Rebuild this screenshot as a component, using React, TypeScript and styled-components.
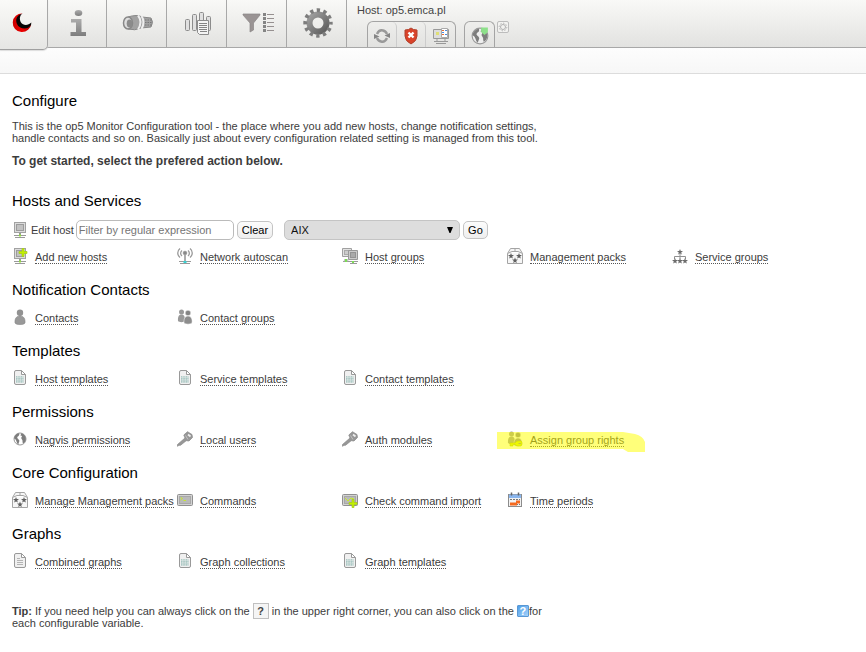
import React from "react";
import styled, { createGlobalStyle } from "styled-components";

const GlobalStyle = createGlobalStyle`
  * { box-sizing: border-box; }
  body {
    margin: 0;
    background: #fff;
    color: #3c3c3c;
    font: 11px/12px "Liberation Sans", Arial, sans-serif;
  }
  button, input, select { font: inherit; }
`;

/* ---------- header ---------- */

const Header = styled.header`
  display: flex;
  align-items: flex-start;
  height: 48px;
  background: linear-gradient(#f9f9f7, #e2e2e0);
  border-bottom: 1px solid #a8a8a8;
`;

const Nav = styled.nav`
  display: flex;
  flex: none;
`;

const Tab = styled.a<{ $active?: boolean }>`
  display: flex;
  align-items: center;
  justify-content: center;
  width: ${(p) => (p.$active ? 48 : 60)}px;
  height: ${(p) => (p.$active ? 50 : 47)}px;
  padding-right: ${(p) => (p.$active ? 4 : 0)}px;
  padding-bottom: ${(p) => (p.$active ? 4 : 2)}px;
  padding-left: ${(p) => (p.$active ? 0 : 2)}px;
  border-right: 1px solid #a8a8a8;
  border-bottom: ${(p) => (p.$active ? "1px solid #a0a0a0" : "0")};
  border-bottom-right-radius: ${(p) => (p.$active ? 5 : 0)}px;
  background: ${(p) => (p.$active ? "linear-gradient(#fafaf8, #e6e6e4)" : "transparent")};
  box-shadow: ${(p) => (p.$active ? "0 1px 1px #ddd" : "none")};
  &:nth-child(2) { width: 59px; }
`;

const HostArea = styled.div`
  display: flex;
  flex-direction: column;
  gap: 5px;
  padding: 4px 10px 0;
  color: #444;
`;

const QuickBar = styled.div`
  display: flex;
  align-items: flex-start;
  padding-left: 10px;
`;

const QuickGroup = styled.div`
  display: flex;
  height: 26px;
  margin-right: 8px;
  border: 1px solid #a4a4a4;
  border-bottom: 0;
  border-radius: 6px 6px 0 0;
  overflow: hidden;
`;

const QuickLink = styled.a`
  display: flex;
  align-items: center;
  justify-content: center;
  width: 29px;
  padding-top: 2px;
  border-right: 1px solid #ccc;
  border-top-right-radius: 5px;
  &:last-child { border-right: 0; }
`;

const SettingsButton = styled.button`
  display: flex;
  align-items: center;
  justify-content: center;
  width: 12px;
  height: 12px;
  margin-left: -6px;
  padding: 0;
  border: 1px solid #bcbcbc;
  border-radius: 2px;
  background: #f2f2f0;
`;

const SubBar = styled.div`
  height: 26px;
  background: linear-gradient(#fdfdfd, #f7f7f7);
  border-bottom: 1px solid #dcdcdc;
`;

/* ---------- content ---------- */

const Main = styled.main`
  padding: 18px 12px 22px;
`;

const Heading = styled.h2`
  margin: 0 0 10px;
  color: #000;
  font-size: 15px;
  font-weight: 400;
  line-height: 18px;
`;

const Intro = styled.p`
  max-width: 540px;
  margin: 0 0 11px;
`;

const Lead = styled(Intro)`
  font-size: 12px;
  font-weight: 700;
`;

const Section = styled.section<{ $first?: boolean }>`
  margin-top: ${(p) => (p.$first ? 25 : 15)}px;
`;

const FilterForm = styled.form`
  display: flex;
  align-items: center;
  margin-bottom: 8px;
`;

const FilterLabel = styled.label`
  display: flex;
  align-items: center;
  gap: 3px;
  margin-right: 2px;
`;

const FilterInput = styled.input`
  width: 158px;
  height: 20px;
  padding: 0 2px;
  border: 1px solid #bbb;
  border-radius: 5px;
  background: #fff;
  &::placeholder { color: #757575; opacity: 1; }
`;

const Button = styled.button`
  height: 18px;
  margin-left: 3px;
  padding: 0 4px;
  border: 1px solid #c4c4c4;
  border-radius: 5px;
  background: linear-gradient(#fcfcfc, #eee);
  color: #000;
`;

const SelectWrap = styled.div`
  display: grid;
  align-items: center;
  margin-left: 11px;
  > * { grid-area: 1 / 1; }
`;

const Select = styled.select`
  width: 176px;
  height: 20px;
  padding: 0 6px;
  appearance: none;
  border: 1px solid #c4c4c4;
  border-radius: 5px;
  background: #ddd;
  color: #111;
`;

const SelectArrow = styled.svg`
  justify-self: end;
  margin-right: 6px;
  pointer-events: none;
`;

const ActionGrid = styled.ul`
  display: grid;
  grid-template-columns: repeat(auto-fill, 165px);
  margin: 0;
  padding: 0;
  list-style: none;
`;

const Action = styled.li`
  position: relative;
  display: flex;
  align-items: center;
  gap: 7px;
  height: 18px;
  white-space: nowrap;
  > svg { flex: none; margin-bottom: 2px; }
`;

const ActionLink = styled.a`
  color: #3c3c3c;
  text-decoration: none;
  border-bottom: 1px dotted #555;
  line-height: 12px;
  margin-top: 1px;
`;

const Marker = styled.svg`
  position: absolute;
  left: -10px;
  top: 0;
  pointer-events: none;
`;

const Tip = styled.p`
  max-width: 540px;
  margin: 34px 0 0;
`;

/* ---------- icons ---------- */

type IconName =
  | "host" | "hostAdd" | "scan" | "hosts" | "pack" | "serviceGroup"
  | "contact" | "contacts" | "sheet" | "globe" | "key" | "rights"
  | "terminal" | "terminalAdd" | "calendar" | "report";

const STAR = "M0-3L.8-.9 3-.9 1.200.5 1.900 2.600 0 1.400-1.900 2.600-1.200.5-3-.9-.8-.9Z";

const Plus = () => (
  <path d="M8.500 0h2v3h3v2h-3v3h-2V5h-3V3h3z" fill="#c4f000" stroke="#a3cc1a" strokeWidth=".7" />
);
const Monitor = () => (
  <>
    <rect x="2.500" y=".5" width="11" height="10" fill="#dcdcdc" stroke="#a2a2a2" />
    <rect x="4.500" y="2.500" width="7" height="6" fill="#c2c2c2" stroke="#9c9c9c" />
    <path d="M7 11h2v2H7z" fill="#999" />
    <path d="M2 13.500h12M3 15.500h10" stroke="#999" />
    <path d="M7 13.500h2" stroke="#8fe03a" strokeWidth="2" />
  </>
);
const Person = () => (
  <>
    <circle cx="8" cy="3.700" r="3.200" fill="#929292" />
    <path d="M3 14c-.3-4 1-7 5-7s5.300 3 5 7c-1 2-9 2-10 0z" fill="#999" stroke="#858585" strokeWidth=".6" />
  </>
);
const People = () => (
  <>
    <circle cx="4.500" cy="3" r="2.500" fill="#999" />
    <path d="M1 12c-.3-4 .6-6.500 3.500-6.500S8 8 8 12c-1 1.500-6 1.500-7 0z" fill="#999" />
    <circle cx="11" cy="4" r="2.800" fill="#858585" stroke="#fff" strokeWidth=".5" />
    <path d="M7 14c-.3-4 .8-7 4-7s4.500 3 4 7c-1 1.500-7 1.500-8 0z" fill="#8d8d8d" stroke="#fff" strokeWidth=".5" />
  </>
);
const Page = () => (
  <path d="M2.500 2q0-1.500 1.500-1.500h5.500l4 4V13q0 1.500-1.500 1.500H4q-1.500 0-1.500-1.500zM9.500.5v4h4" fill="#f0f0f0" stroke="#999" />
);
const Screen = () => (
  <>
    <rect x=".5" y="2.500" width="15" height="11" rx="1" fill="#d2d2d2" stroke="#909090" />
    <rect x="2.500" y="4.500" width="11" height="7" fill="#bababa" stroke="#a8a8a8" />
  </>
);
const EarthLand = () => (
  <path d="M7 1.500c-3 .3-5.500 3-5.500 6 1.500.5 2 1.500 2.500 3s1 3 2.200 3.500c0-2 1.800-3.500.8-5S4.500 7.500 5 6s3-1.500 2-4.500zM9.500 1.700 8.500 4l1.800.8-1 2.200c.7 2 1.800 1.800 1.500 4l.4 2.200c2-1 3.300-3 3.300-5.200 0-3-2-5.800-5-6.300z" fill="#7d7d7d" />
);

const glyphs: Record<IconName, React.ReactNode> = {
  host: <Monitor />,
  hostAdd: <><Monitor /><g transform="translate(1.500 .5)"><Plus /></g></>,
  scan: (
    <g fill="none" stroke="#999">
      <path d="M3 .5C0 3 0 7 3 9.500M13 .5c3 2.500 3 6.500 0 9M5 2.500c-1.800 1.500-1.800 4 0 5.500M11 2.500c1.800 1.500 1.800 4 0 5.500" strokeWidth="1.300" />
      <circle cx="8" cy="5" r="1.800" fill="#888" />
      <path d="M8 7v6" strokeWidth="1.600" />
      <path d="M2 13.500h12M3 15.500h10" />
      <path d="M6.500 14h3" stroke="#38cfd0" strokeWidth="2" />
    </g>
  ),
  hosts: (
    <>
      <path d="M.5.5h9v8h-9zM3 11v2.500H1M5 11v2.500h3" fill="#e2e2e2" stroke="#a0a0a0" />
      <rect x="2.500" y="2.500" width="5" height="4" fill="#ccc" stroke="#aaa" />
      <path d="M6.500 2.500h9v9h-9z" fill="#ccc" stroke="#999" />
      <path d="M6 13.500h10M8 15.500h7" stroke="#999" />
      <rect x="8.500" y="4.500" width="5" height="5" fill="#aaa" stroke="#949494" />
      <path d="M4 11v3M10 14h2" stroke="#7cdd55" strokeWidth="2" />
    </>
  ),
  pack: (
    <>
      <path d="M.5 5.500v10h15v-10L12.500.5h-9zM.5 5.500 5 3.500h6l4.500 2M8 .5v3" fill="#f6f6f6" stroke="#a4a4a4" />
      <g fill="#606060">
        <path transform="translate(4 8)" d={STAR} />
        <path transform="translate(12 8)" d={STAR} />
        <path transform="translate(8 12.500)" d={STAR} />
      </g>
    </>
  ),
  serviceGroup: (
    <>
      <path d="M8 6v5M2.500 11V8.500h11V11" fill="none" stroke="#909090" />
      <g fill="#6c6c6c">
        <path transform="translate(8 4)" d={STAR} />
        <path transform="translate(3 13)" d={STAR} />
        <path transform="translate(8 13)" d={STAR} />
        <path transform="translate(13 13)" d={STAR} />
      </g>
    </>
  ),
  contact: <Person />,
  contacts: <People />,
  sheet: (
    <>
      <Page />
      <path d="M4 6h8v7H4z" fill="#d3e0de" />
      <path d="M4.500 6v7M7 6v7M9.500 6v7M4 8.500h8M4 11h8" stroke="#9dc0bc" strokeWidth=".7" strokeDasharray="1 .6" />
    </>
  ),
  report: (
    <>
      <Page />
      <path d="M5 5.500h3M5 7.500h6M5 9.500h6M5 11.500h6" stroke="#b4b4b4" />
    </>
  ),
  globe: (
    <>
      <circle cx="8" cy="8" r="6" fill="#fff" stroke="#999" />
      <g transform="translate(.8 .8) scale(.9)"><EarthLand /></g>
    </>
  ),
  key: (
    <>
      <path d="M.5 13.500 8 7 6.800 4 10.500.7 15 3.500l.5 3-3.500 3.500-2.800-.3-5.700 4.600H2l-1.500 1z" fill="#979797" stroke="#888" strokeWidth=".7" />
      <path d="M11 3.500l2.500 2" stroke="#eee" strokeWidth="1.800" />
      <path d="M8.500 4.500 11 8.500" stroke="#c2c2c2" />
    </>
  ),
  rights: (
    <>
      <People />
      <path d="M3 12h5q1-2 3-2h3q1 1 1 2.500T14 15h-3q-2 0-3-1.500H6V15H3z" fill="#d9ee00" stroke="#a9b800" strokeWidth=".6" />
      <path d="M11.500 12.500H14" stroke="#888" />
    </>
  ),
  terminal: (
    <>
      <Screen />
      <path d="M3.500 5.500l2 1-2 1.500M6.500 8.500H9" fill="none" stroke="#c5e82c" />
    </>
  ),
  terminalAdd: (
    <>
      <Screen />
      <path d="M3 6l3 3 3-3 3 1" fill="none" stroke="#c5e82c" />
      <g transform="translate(1.500 7.500)"><Plus /></g>
    </>
  ),
  calendar: (
    <>
      <rect x="1.500" y="2.500" width="13" height="12" fill="#f2f2f2" stroke="#8c8c8c" />
      <path d="M2 2.500h12V6H2z" fill="#8ab6ee" />
      <path d="M4.500.5v3M11.500.5v3" stroke="#666" strokeWidth="1.500" />
      <path d="M3 7.500h10" stroke="#777" strokeDasharray="2 1" />
      <path d="M3 10.500h6v-2h4v3h-3v2H3z" fill="#f4691e" />
      <path d="M10 12.500h3" stroke="#777" strokeDasharray="1 1" />
    </>
  ),
};

const Icon = ({ name }: { name: IconName }) => (
  <svg width="16" height="16" viewBox="0 0 16 16" aria-hidden="true">{glyphs[name]}</svg>
);

const LogoIcon = () => (
  <svg width="20" height="20" viewBox="0 0 20 20" aria-hidden="true">
    <defs>
      <linearGradient id="logoRed" x1="0" y1=".5" x2="1" y2=".4">
        <stop offset="0" stopColor="#c00" /><stop offset=".5" stopColor="#e00" /><stop offset="1" stopColor="#900" />
      </linearGradient>
    </defs>
    <path d="M10.500.5A9.300 9.300 0 1 0 19.300 10.500C17 15 10 14.500 8 10S7 1.500 10.500.5z" fill="url(#logoRed)" />
    <path d="M10.500.5C5 2 3 6 5 11s10.500 6.500 14 1l.3-2.500c-3.300 3.500-8.500 3-10.300 0S7.500 2.500 10.500.5z" fill="#050505" />
  </svg>
);

const InfoIcon = () => (
  <svg width="18" height="28" viewBox="0 0 18 28" aria-hidden="true">
    <defs>
      <linearGradient id="infoGrey" x1="0" y1="0" x2="0" y2="1">
        <stop offset="0" stopColor="#adadad" /><stop offset="1" stopColor="#7d7d7d" />
      </linearGradient>
    </defs>
    <ellipse cx="9.500" cy="4" rx="3.800" ry="3" fill="url(#infoGrey)" />
    <path d="M2 10h10.500v13H17v4H1.500v-4H7v-9.500H2z" fill="url(#infoGrey)" />
  </svg>
);

const TorchIcon = () => (
  <svg width="32" height="18" viewBox="0 0 32 18" aria-hidden="true">
    <path d="M6 3Q15 0 20 3l9 1q3 4 0 9l-10 1q-6 3-13 1z" fill="#a2a2a2" stroke="#888" />
    <ellipse cx="6" cy="9" rx="4.500" ry="6" fill="#ddd" stroke="#888" strokeWidth="1.500" />
    <ellipse cx="7.500" cy="9.500" rx="2.800" ry="4" fill="#8b8b8b" />
    <path d="M16 1.500q5 6 0 14M19.500 2q4 6 0 13" fill="none" stroke="#eee" strokeWidth="2" />
    <path d="M23 6h7M23 8.500h7.500M23 11h7" stroke="#787878" strokeDasharray="1.500 1" />
  </svg>
);

const ReportsIcon = () => (
  <svg width="28" height="26" viewBox="0 0 28 26" aria-hidden="true">
    <g fill="#e0e0e0" stroke="#8c8c8c">
      <rect x="1.500" y="9.500" width="4" height="11" rx="1" />
      <rect x="8.500" y="4.500" width="4" height="16" rx="1" />
      <rect x="15.500" y="2.500" width="4" height="18" rx="1" />
      <rect x="22.500" y="6.500" width="4" height="14" rx="1" />
      <path d="M13.500 10.500h11v14h-9l-2-2z" fill="#f5f5f5" />
    </g>
    <path d="M15 13.500h8M15 15.500h8M15 17.500h8M15 19.500h8M16 21.500h7" stroke="#858585" />
  </svg>
);

const FilterIcon = () => (
  <svg width="32" height="22" viewBox="0 0 32 22" aria-hidden="true">
    <path d="M1 2h17v1l-6.500 8v7L8 20v-9L1 3z" fill="#9a9494" stroke="#8b8787" strokeWidth=".7" />
    <path d="M22.500 1v20" stroke="#858585" strokeWidth="3" strokeDasharray="3 1" />
    <path d="M25 2.500h7M25 6.500h7M25 10.500h7M25 14.500h7M25 18.500h7" stroke="#969090" />
  </svg>
);

const GearIcon = () => (
  <svg width="32" height="30" viewBox="-16 -15 32 30" aria-hidden="true">
    <defs>
      <linearGradient id="gearGrey" x1="0" y1="0" x2="1" y2="1">
        <stop offset="0" stopColor="#a0a0a0" /><stop offset="1" stopColor="#5d5d5d" />
      </linearGradient>
    </defs>
    <circle r="8.500" fill="none" stroke="url(#gearGrey)" strokeWidth="6" />
    <circle r="12.700" fill="none" stroke="#7d7d7d" strokeWidth="4" strokeDasharray="3.320 3.329" strokeDashoffset="1.660" />
  </svg>
);

const RefreshIcon = () => (
  <svg width="16" height="16" viewBox="0 0 16 16" aria-hidden="true">
    <path d="M3 6Q5 1.500 9 2.500q3 .7 4 3.500M13 10q-2 4.500-6 3.500-3-.7-4-3.500" fill="none" stroke="#999" strokeWidth="2.400" />
    <path d="M16 5v5l-5.500-2.500zM0 11V6l5.500 2.500z" fill="#858585" />
  </svg>
);

const ShieldIcon = () => (
  <svg width="16" height="18" viewBox="0 0 16 18" aria-hidden="true">
    <path d="M2 3q4 0 6-2 2 2 6 2v6q0 5-6 8-6-3-6-8z" fill="#d9432a" stroke="#b0432f" />
    <path d="M5.500 5.500l5 5M10.500 5.500l-5 5" stroke="#fff" strokeWidth="2.400" />
  </svg>
);

const HostViewIcon = () => (
  <svg width="16" height="16" viewBox="0 0 16 16" aria-hidden="true">
    <path d="M.5 1.500h15v9H.5z" fill="#ddd" stroke="#999" />
    <path d="M4 11v2M12 11v2M1 13.500h14M3 15.500h10" stroke="#999" />
    <path d="M8.500.5h6v9h-6z" fill="#fff" stroke="#aaa" />
    <path d="M9 2.500h2M9 6.500h2" stroke="#e56b34" />
    <path d="M9 4.500h2M12 2.500h2M12 6.500h2" stroke="#4e8de0" />
    <rect x="3" y="4" width="3" height="3" fill="#dfdf75" />
  </svg>
);

const MapIcon = () => (
  <svg width="18" height="18" viewBox="0 0 16 16" aria-hidden="true">
    <circle cx="8" cy="8" r="7" fill="#eee" stroke="#999" />
    <EarthLand />
    <path d="M9 .5h6v4L12 7 9 4.500z" fill="#8de08a" />
  </svg>
);

const SmallGearIcon = () => (
  <svg width="10" height="10" viewBox="0 0 10 10" aria-hidden="true">
    <circle cx="5" cy="5" r="2.500" fill="none" stroke="#b0b0b0" />
    <circle cx="5" cy="5" r="3.800" fill="none" stroke="#b0b0b0" strokeDasharray="1.400 1.500" />
  </svg>
);

const HelpBox = styled.span`
  display: inline-block;
  width: 16px;
  height: 16px;
  margin: -4px 0;
  border: 1px solid #c0c0c0;
  background: #f5f5f5;
  color: #444;
  font-weight: 700;
  line-height: 14px;
  text-align: center;
`;

const VariableHelp = styled.span`
  display: inline-block;
  width: 12px;
  height: 12px;
  border: 1px solid #5a98d4;
  border-radius: 1px;
  background: linear-gradient(135deg, #4e9fe8, #a5d2fa);
  color: #fff;
  font-weight: 700;
  line-height: 10px;
  text-align: center;
`;

/* ---------- data ---------- */

type Item = { icon: IconName; label: string; marked?: boolean };

const hostItems: Item[] = [
  { icon: "hostAdd", label: "Add new hosts" },
  { icon: "scan", label: "Network autoscan" },
  { icon: "hosts", label: "Host groups" },
  { icon: "pack", label: "Management packs" },
  { icon: "serviceGroup", label: "Service groups" },
];

const sections: { title: string; items: Item[] }[] = [
  { title: "Notification Contacts", items: [
    { icon: "contact", label: "Contacts" },
    { icon: "contacts", label: "Contact groups" },
  ] },
  { title: "Templates", items: [
    { icon: "sheet", label: "Host templates" },
    { icon: "sheet", label: "Service templates" },
    { icon: "sheet", label: "Contact templates" },
  ] },
  { title: "Permissions", items: [
    { icon: "globe", label: "Nagvis permissions" },
    { icon: "key", label: "Local users" },
    { icon: "key", label: "Auth modules" },
    { icon: "rights", label: "Assign group rights", marked: true },
  ] },
  { title: "Core Configuration", items: [
    { icon: "pack", label: "Manage Management packs" },
    { icon: "terminal", label: "Commands" },
    { icon: "terminalAdd", label: "Check command import" },
    { icon: "calendar", label: "Time periods" },
  ] },
  { title: "Graphs", items: [
    { icon: "report", label: "Combined graphs" },
    { icon: "sheet", label: "Graph collections" },
    { icon: "sheet", label: "Graph templates" },
  ] },
];

const Actions = ({ items }: { items: Item[] }) => (
  <ActionGrid>
    {items.map((item) => (
      <Action key={item.label}>
        <Icon name={item.icon} />
        <ActionLink href="#">{item.label}</ActionLink>
        {item.marked && (
          <Marker width="150" height="22" viewBox="0 0 150 22" aria-hidden="true">
            <path d="M0 1h126l12 2q8 2 10 8v10h-17l-5-3H0z" fill="#ff0" fillOpacity=".52" />
          </Marker>
        )}
      </Action>
    ))}
  </ActionGrid>
);

export default function App() {
  return (
    <>
      <GlobalStyle />
      <Header>
        <Nav>
          <Tab href="#" $active aria-label="Home"><LogoIcon /></Tab>
          <Tab href="#" aria-label="About"><InfoIcon /></Tab>
          <Tab href="#" aria-label="Monitoring"><TorchIcon /></Tab>
          <Tab href="#" aria-label="Reporting"><ReportsIcon /></Tab>
          <Tab href="#" aria-label="Filters"><FilterIcon /></Tab>
          <Tab href="#" aria-label="Configuration"><GearIcon /></Tab>
        </Nav>
        <HostArea>
          <div>Host: op5.emca.pl</div>
          <QuickBar>
            <QuickGroup>
              <QuickLink href="#" aria-label="Refresh"><RefreshIcon /></QuickLink>
              <QuickLink href="#" aria-label="Problems"><ShieldIcon /></QuickLink>
              <QuickLink href="#" aria-label="Host view"><HostViewIcon /></QuickLink>
            </QuickGroup>
            <QuickGroup>
              <QuickLink href="#" aria-label="Map"><MapIcon /></QuickLink>
            </QuickGroup>
            <SettingsButton type="button" aria-label="Quick link settings"><SmallGearIcon /></SettingsButton>
          </QuickBar>
        </HostArea>
      </Header>
      <SubBar />
      <Main>
        <Heading as="h1">Configure</Heading>
        <Intro>
          This is the op5 Monitor Configuration tool - the place where you add new hosts, change notification settings,
          handle contacts and so on. Basically just about every configuration related setting is managed from this tool.
        </Intro>
        <Lead>To get started, select the prefered action below.</Lead>
        <Section $first>
          <Heading>Hosts and Services</Heading>
          <FilterForm onSubmit={(e) => e.preventDefault()}>
            <FilterLabel htmlFor="filter"><Icon name="host" />Edit host</FilterLabel>
            <FilterInput id="filter" type="text" placeholder="Filter by regular expression" />
            <Button type="reset">Clear</Button>
            <SelectWrap>
              <Select aria-label="Host" defaultValue="AIX"><option>AIX</option></Select>
              <SelectArrow width="8" height="8" viewBox="0 0 8 8" aria-hidden="true"><path d="M1 1h6L4.500 7h-1z" fill="#000" /></SelectArrow>
            </SelectWrap>
            <Button type="submit">Go</Button>
          </FilterForm>
          <Actions items={hostItems} />
        </Section>
        {sections.map((s) => (
          <Section key={s.title}>
            <Heading>{s.title}</Heading>
            <Actions items={s.items} />
          </Section>
        ))}
        <Tip>
          <strong>Tip:</strong> If you need help you can always click on the <HelpBox>?</HelpBox> in the upper right corner, you can
          also click on the <VariableHelp>?</VariableHelp>for each configurable variable.
        </Tip>
      </Main>
    </>
  );
}
